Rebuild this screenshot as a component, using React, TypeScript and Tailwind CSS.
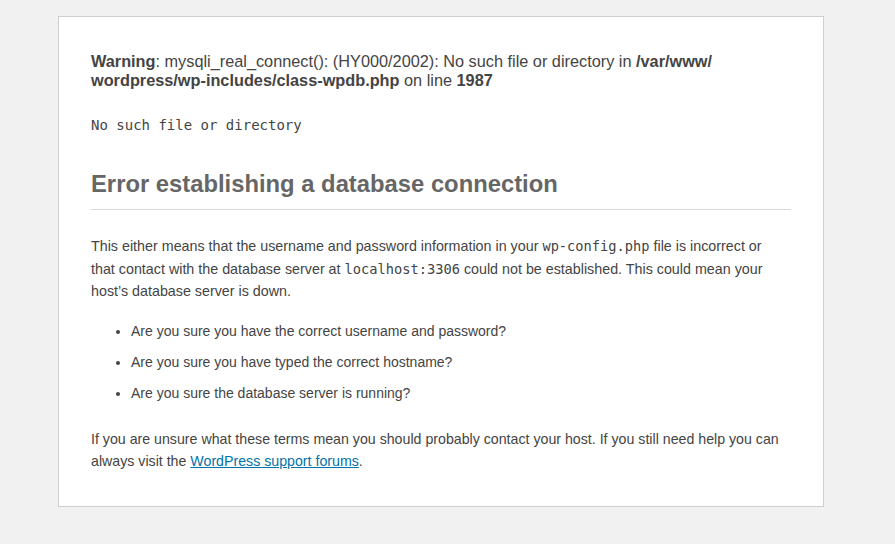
import React from "react";

export default function App() {
  return (
    <div className="min-h-screen w-full bg-[#f1f1f1] pt-[16px] pb-[38px] text-[#444] font-['Liberation_Sans',Arial,sans-serif]">
      <div className="ml-[58px] w-[766px] border border-[#ccd0d4] bg-white px-[32px] pt-[35px] pb-[33px]">
        <div className="text-[16.3px] leading-[19px]">
          <b>Warning</b>: mysqli_real_connect(): (HY000/2002): No such file or directory in <b>/var/www/</b>
          <br />
          <b>wordpress/wp-includes/class-wpdb.php</b> on line <b>1987</b>
        </div>
        <div className="mt-[25px] font-['DejaVu_Sans_Mono',monospace] text-[14px] leading-[21px] text-[#444]">
          No such file or directory
        </div>
        <h1 className="mt-[33px] border-b border-[#dadada] pb-[10px] text-[23.8px] font-bold leading-[30px] text-[#666]">
          Error establishing a database connection
        </h1>
        <p className="mt-[25px] whitespace-nowrap text-[14.3px] leading-[22.5px]">
          This either means that the username and password information in your{" "}
          <code className="font-['DejaVu_Sans_Mono',monospace] text-[13.7px] leading-none">wp-config.php</code> file is incorrect or
          <br />
          that contact with the database server at{" "}
          <code className="font-['DejaVu_Sans_Mono',monospace] text-[13.7px] leading-none">localhost:3306</code> could not be established. This could mean your
          <br />
          host’s database server is down.
        </p>
        <ul className="mt-[18px] list-disc pl-[40px] text-[14px] leading-[21px]">
          <li className="mb-[10px]">Are you sure you have the correct username and password?</li>
          <li className="mb-[10px]">Are you sure you have typed the correct hostname?</li>
          <li className="mb-[10px]">Are you sure the database server is running?</li>
        </ul>
        <p className="mt-[24px] whitespace-nowrap text-[14.2px] leading-[22.5px]">
          If you are unsure what these terms mean you should probably contact your host. If you still need help you can
          <br />
          always visit the{" "}
          <a href="#" className="text-[#0073aa] underline">
            WordPress support forums
          </a>
          .
        </p>
      </div>
    </div>
  );
}
